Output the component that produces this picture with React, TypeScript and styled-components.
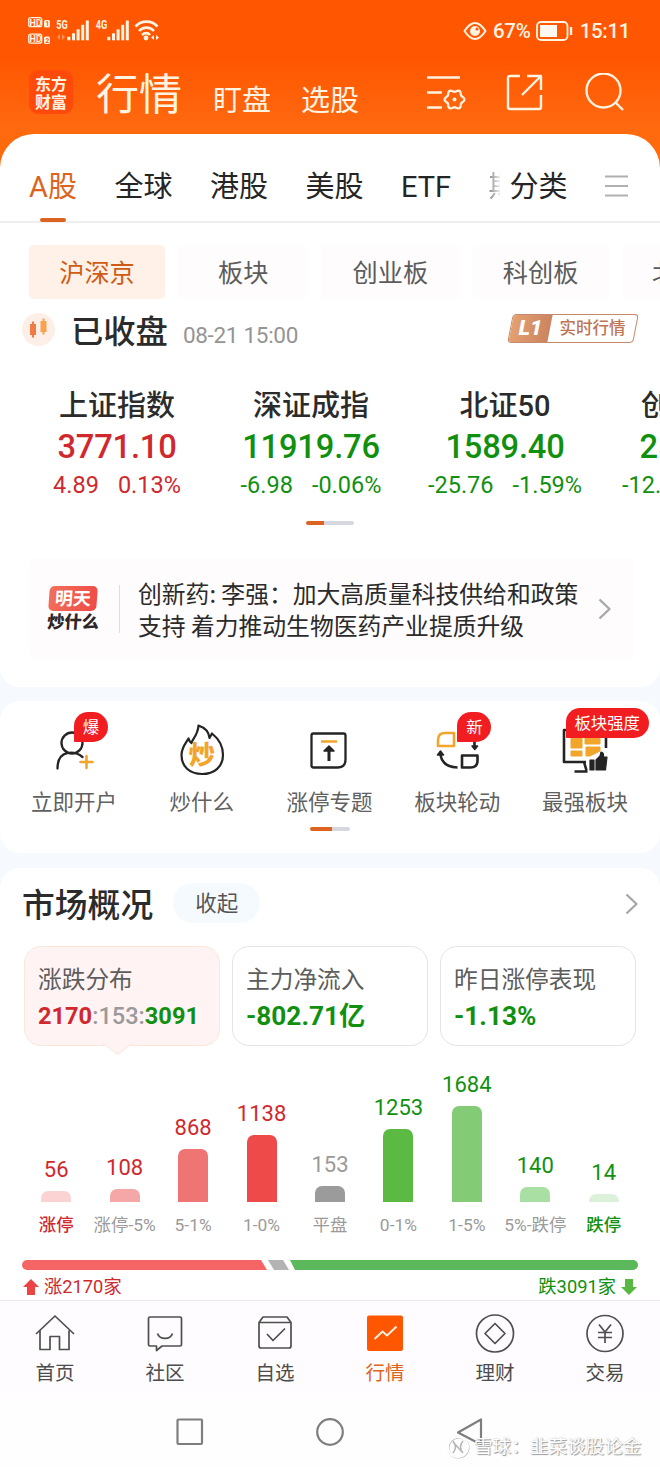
import React from 'react';
import styled, { createGlobalStyle } from 'styled-components';

const RED = '#d0282c';
const GREEN = '#11900f';
const ORANGE = '#dd6420';

const GlobalStyle = createGlobalStyle`
  * { box-sizing: border-box; }
  body {
    margin: 0;
    width: 660px;
    overflow-x: hidden;
    font-family: Roboto, "Noto Sans CJK SC", sans-serif;
    color: #2b2b2b;
    background: #f6faff;
  }
  svg { display: block; flex: none; }
`;

const Screen = styled.main`
  position: relative;
  width: 660px;
  height: 1467px;
  overflow: hidden;
  display: flex;
  flex-direction: column;
  white-space: nowrap;
`;

const Top = styled.header`
  height: 168px;
  flex: none;
  margin-bottom: -34px;
  background: linear-gradient(#ff5601 0, #ff5601 58px, #ff6a10 130px, #ff6a08 168px);
  color: #fff3e2;
`;

const StatusBar = styled.div`
  height: 60px;
  padding: 0 30px 0 27px;
  display: flex;
  justify-content: space-between;
  align-items: center;
`;

const StatusRight = styled.div`
  display: flex;
  align-items: center;
  font-size: 20.5px;
  line-height: 24px;
  font-weight: 500;
  padding-top: 1px;
`;

const Percent = styled.span`
  margin: 0 5px 0 6px;
  letter-spacing: -0.2px;
`;

const Clock = styled.span`
  margin-left: 7px;
  font-size: 20.5px;
  letter-spacing: -0.35px;
`;

const TitleRow = styled.div`
  display: flex;
  height: 74px;
  padding: 0 35px 0 29px;
`;

const Logo = styled.div`
  width: 44px;
  height: 44px;
  margin-top: 10px;
  border-radius: 9px;
  background: #ff4a0c;
  font: 700 16px/18px "Noto Sans CJK SC", sans-serif;
  text-align: center;
  padding-top: 4px;
`;

const Title = styled.h1`
  margin: 9px 0 0 23px;
  font-size: 43px;
  line-height: 52px;
  font-weight: 400;
  width: 86px;
`;

const SubTitle = styled.span<{ $gap: number }>`
  margin: 21px 0 0 ${(p) => p.$gap}px;
  font-size: 29px;
  line-height: 41px;
`;

const TitleIcons = styled.div`
  margin: 13px 0 0 auto;
  display: flex;
  gap: 40px;
`;

const Panel = styled.section<{ $h: number; $mt?: number; $radius: string }>`
  height: ${(p) => p.$h}px;
  flex: none;
  margin-top: ${(p) => p.$mt ?? 0}px;
  background: #fff;
  border-radius: ${(p) => p.$radius};
  overflow: hidden;
`;

const Tabs = styled.nav`
  height: 89px;
  border-bottom: 2px solid #efeff0;
  padding: 0 32px 0 29px;
  display: flex;
  font-size: 29px;
  line-height: 107px;
`;

const Tab = styled.div<{ $active?: boolean }>`
  margin-right: 37.5px;
  position: relative;
  color: ${(p) => (p.$active ? ORANGE : '#252525')};
  ${(p) =>
    p.$active &&
    `&::after {
      content: '';
      position: absolute;
      left: 11px;
      top: 84px;
      width: 26px;
      height: 4px;
      border-radius: 2px;
      background: ${ORANGE};
    }`}
`;

const CutTab = styled.div`
  width: 13px;
  overflow: hidden;
  margin-right: 9px;
  color: transparent;
  background: linear-gradient(90deg, #888, #eee);
  background-clip: text;
  -webkit-background-clip: text;
`;

const MenuButton = styled.div`
  margin: 41px 0 0 auto;
`;

const Chips = styled.div`
  margin: 22px 0 0 29px;
  display: flex;
  height: 54px;
`;

const Chip = styled.div<{ $w: number; $active?: boolean }>`
  flex: none;
  width: ${(p) => p.$w}px;
  margin-right: 13.2px;
  border-radius: 5px;
  background: ${(p) => (p.$active ? '#fff0e8' : '#fefcfd')};
  color: ${(p) => (p.$active ? '#cf5c14' : '#5c5c5c')};
  font-size: 25.2px;
  line-height: 58px;
  text-align: center;
`;

const MarketState = styled.div`
  height: 60px;
  padding: 0 22px;
  display: flex;
  align-items: center;
`;

const StateName = styled.strong`
  font-size: 32.3px;
  font-weight: 500;
  margin-left: 16px;
  line-height: 44px;
  padding-top: 5px;
`;

const StateTime = styled.span`
  margin-left: 15px;
  padding-top: 11px;
  font-size: 22.5px;
  letter-spacing: -0.3px;
  line-height: 28px;
  color: #949494;
`;

const LevelBadge = styled.div`
  margin-left: auto;
  width: 126px;
  height: 29px;
  display: flex;
  border: 1.5px solid #c58a6d;
  border-radius: 4px;
  transform: skewX(-11deg);
  overflow: hidden;
  margin-right: 2px;
  margin-bottom: 2px;
`;

const LevelTag = styled.b`
  width: 39px;
  background: linear-gradient(90deg, #e4a070, #cb8460);
  color: #fff;
  font-size: 21px;
  line-height: 27px;
  font-weight: 900;
  text-align: center;
`;

const LevelText = styled.span`
  flex: 1;
  text-align: center;
  transform: skewX(11deg);
  color: #bd7553;
  font-size: 16.5px;
  line-height: 27px;
  font-weight: 500;
`;

const Indices = styled.div`
  display: flex;
  margin: 27px 0 0 20px;
`;

const Index = styled.div`
  flex: none;
  width: 194px;
  text-align: center;
`;

const IndexName = styled.div`
  font-size: 29px;
  line-height: 40px;
  font-weight: 500;
`;

const IndexValue = styled.div<{ $c: string }>`
  color: ${(p) => p.$c};
  font-size: 32.7px;
  line-height: 42px;
  font-weight: 500;
  letter-spacing: -0.2px;
`;

const IndexChange = styled.div<{ $c: string }>`
  color: ${(p) => p.$c};
  font-size: 23.5px;
  line-height: 34px;
  display: flex;
  justify-content: center;
  gap: 19px;
`;

const Pager = styled.div<{ $w: number; $on: number; $mt: number }>`
  width: ${(p) => p.$w}px;
  height: 4px;
  margin: ${(p) => p.$mt}px auto 0;
  border-radius: 2px;
  background: linear-gradient(90deg, ${ORANGE} ${(p) => p.$on}px, #d6d7e0 ${(p) => p.$on}px);
`;

const News = styled.div`
  margin: 33px 26px 0 29px;
  height: 101px;
  border-radius: 8px;
  background: #fefcfd;
  padding: 0 22px 0 18px;
  display: flex;
  align-items: center;
`;

const NewsLogo = styled.div`
  width: 52px;
  text-align: center;
  padding-top: 1px;
`;

const NewsLogoTop = styled.div`
  margin: 0 auto;
  width: 48px;
  height: 25px;
  border-radius: 5px;
  background: linear-gradient(100deg, #f2705c, #ee4b45);
  color: #fff;
  font-size: 18px;
  line-height: 25px;
  font-weight: 700;
  transform: skewX(-4deg);
`;

const NewsLogoBottom = styled.div`
  font-size: 17.3px;
  line-height: 22px;
  font-weight: 900;
  color: #2e2728;
  transform: skewX(-4deg);
`;

const NewsText = styled.p`
  margin: 0;
  margin-left: 20px;
  padding-left: 18px;
  border-left: 1px solid #dedede;
  font-size: 23.8px;
  line-height: 32px;
  height: 48px;
  display: flex;
  align-items: center;
  font-family: "Noto Sans CJK SC", sans-serif;
`;

const Chevron = styled.span`
  margin-left: auto;
`;

const Shortcuts = styled.div`
  display: flex;
  padding: 20px 11px 0 10px;
`;

const Shortcut = styled.div`
  position: relative;
  flex: 1;
  display: flex;
  flex-direction: column;
  align-items: center;
  color: #606060;
  font-size: 21.5px;
  line-height: 30px;
  svg { margin-bottom: 9px; }
`;

const Bubble = styled.span<{ $x: number; $y: number; $w: number }>`
  position: absolute;
  left: ${(p) => p.$x}px;
  top: ${(p) => p.$y}px;
  width: ${(p) => p.$w}px;
  height: 30px;
  border-radius: 15px 16px 16px 1px;
  background: #f21d20;
  color: #fff;
  font-size: 16.4px;
  line-height: 32px;
  text-align: center;
`;

const SectionHead = styled.div`
  display: flex;
  align-items: center;
  height: 72px;
  padding: 0 21px 0 22px;
`;

const SectionTitle = styled.h2`
  margin: 0;
  font-size: 32.8px;
  line-height: 44px;
  font-weight: 500;
  padding-top: 4px;
`;

const Pill = styled.span`
  margin-left: 20px;
  width: 87px;
  height: 40px;
  border-radius: 20px;
  background: #f5faff;
  color: #555;
  font-size: 21.5px;
  line-height: 42px;
  text-align: center;
  margin-top: -2px;
`;

const Cards = styled.div`
  display: flex;
  gap: 12px;
  padding: 0 24px;
  margin-top: 6px;
`;

const Card = styled.div<{ $active?: boolean }>`
  position: relative;
  width: 196px;
  height: 100px;
  padding: 14.5px 0 0 13px;
  border-radius: 17px;
  border: 1.5px solid ${(p) => (p.$active ? '#fbe6dc' : '#e4e4e4')};
  background: ${(p) => (p.$active ? '#fff3f4' : '#fff')};
  ${(p) =>
    p.$active &&
    `&::after {
      content: '';
      position: absolute;
      left: 84px;
      bottom: -7px;
      width: 16px;
      height: 16px;
      transform: scaleX(1.3) rotate(45deg);
      border: solid #fbe6dc;
      border-width: 0 1.5px 1.5px 0;
      background: #fff3f4;
      border-radius: 0 0 3px 0;
    }`}
`;

const CardLabel = styled.div`
  font-size: 23.7px;
  line-height: 36px;
  color: #5d5d5d;
`;

const CardValue = styled.div<{ $c: string; $size?: number }>`
  font-size: ${(p) => p.$size ?? 26.2}px;
  line-height: 36px;
  font-weight: 700;
  color: ${(p) => p.$c};
`;

const Tint = styled.span<{ $c: string; $w?: number }>`
  color: ${(p) => p.$c};
  font-weight: ${(p) => p.$w ?? 700};
`;

const Chart = styled.div`
  display: flex;
  align-items: flex-end;
  height: 172px;
  margin: 19px 22px 0;
`;

const Column = styled.div`
  flex: 1;
  min-width: 0;
  display: flex;
  flex-direction: column;
  align-items: center;
`;

const BarValue = styled.span<{ $c: string }>`
  color: ${(p) => p.$c};
  font-size: 22px;
  line-height: 26px;
  margin-bottom: 8px;
`;

const Bar = styled.div<{ $h: number; $c: string }>`
  width: 30px;
  height: ${(p) => p.$h}px;
  border-radius: 7px 7px 0 0;
  background: ${(p) => p.$c};
`;

const BarLabel = styled.span<{ $c: string; $bold?: boolean }>`
  color: ${(p) => p.$c};
  font-weight: ${(p) => (p.$bold ? 500 : 400)};
  font-size: 17.4px;
  line-height: 24px;
  margin-top: 11px;
`;

const Ratio = styled.div`
  display: flex;
  margin: 23px 22px 0;
  height: 10px;
`;

const RatioPart = styled.div<{ $w: number; $c: string; $clip: string; $r: string }>`
  width: ${(p) => p.$w}px;
  background: ${(p) => p.$c};
  border-radius: ${(p) => p.$r};
  clip-path: polygon(${(p) => p.$clip});
`;

const RatioText = styled.div`
  display: flex;
  justify-content: space-between;
  padding: 4px 23px 0;
  font-size: 18.3px;
  line-height: 26px;
`;

const RatioSide = styled.span<{ $c: string }>`
  color: ${(p) => p.$c};
  display: flex;
  align-items: center;
  gap: 5px;
`;

const BottomTabs = styled.nav`
  height: 95px;
  flex: none;
  display: flex;
  background: #fefcfe;
  border-top: 1px solid #e9e8ea;
`;

const BottomTab = styled.div<{ $active?: boolean }>`
  width: 110px;
  padding-top: 12.5px;
  display: flex;
  flex-direction: column;
  align-items: center;
  gap: 6.5px;
  font-size: 19.5px;
  line-height: 28px;
  color: ${(p) => (p.$active ? ORANGE : '#4c4c4c')};
`;

const SystemNav = styled.div`
  height: 72px;
  flex: none;
  background: #fefefe;
  display: flex;
  align-items: center;
  justify-content: center;
  gap: 112.5px;
  padding-top: 1px;
`;

const Watermark = styled.div`
  position: absolute;
  left: 446px;
  top: 1434px;
  display: flex;
  align-items: center;
  gap: 4px;
  color: #fff;
  font-size: 18.6px;
  line-height: 26px;
  font-weight: 400;
  text-shadow: 1px 1px 1px #999, 0 0 1px #bbb;
`;

const bars: [string, string, number, string, string][] = [
  ['56', '涨停', 11, '#fbd3d3', RED],
  ['108', '涨停-5%', 13, '#f5a7a7', RED],
  ['868', '5-1%', 53, '#ef7474', RED],
  ['1138', '1-0%', 67, '#ee4a4a', RED],
  ['153', '平盘', 16, '#9b9b9b', '#9a9a9a'],
  ['1253', '0-1%', 73, '#5aba41', GREEN],
  ['1684', '1-5%', 96, '#84cb76', GREEN],
  ['140', '5%-跌停', 15, '#aadfa3', GREEN],
  ['14', '跌停', 8, '#dbf1d9', GREEN],
];

const indices: [string, string, string, string, string][] = [
  ['上证指数', '3771.10', '4.89', '0.13%', RED],
  ['深证成指', '11919.76', '-6.98', '-0.06%', GREEN],
  ['北证50', '1589.40', '-25.76', '-1.59%', GREEN],
  ['创业板指', '2595.47', '-12.18', '-0.47%', GREEN],
];

const gearPoints = Array.from({ length: 60 }, (_, i) => {
  const a = (i * Math.PI) / 30;
  const r = 8.8 + 1.1 * Math.cos(6 * a);
  return `${(454.5 + r * Math.cos(a)).toFixed(2)},${(99.5 + r * Math.sin(a)).toFixed(2)}`;
}).join(' ');

function Svg({ box, children, color = 'currentColor', sw = 2 }: { box: string; children: React.ReactNode; color?: string; sw?: number }) {
  const [, , w, h] = box.split(' ');
  return (
    <svg viewBox={box} width={w} height={h} fill="none" stroke={color} strokeWidth={sw} strokeLinejoin="round">
      {children}
    </svg>
  );
}

const SignalIcons = () => (
  <Svg box="27 14 134 32" sw={0}>
    <g fill="#fff3e2" fontFamily="Roboto" fontWeight="700">
      <rect x="28.7" y="17.7" width="13" height="9" rx="2" stroke="#fff3e2" strokeWidth="1.3" fill="none" />
      <text x="29.6" y="25.5" fontSize="9">HD</text>
      <rect x="28.7" y="34.2" width="13" height="9" rx="2" stroke="#fff3e2" strokeWidth="1.3" fill="none" />
      <text x="29.6" y="42" fontSize="9">HD</text>
      <rect x="44" y="20" width="6" height="7.5" rx="1.5" />
      <rect x="44" y="36.5" width="6" height="7.5" rx="1.5" />
      <text x="45.6" y="26.3" fontSize="6.5" fill="#ff5601">1</text>
      <text x="45.4" y="42.8" fontSize="6.5" fill="#ff5601">2</text>
      <text x="56.3" y="29" fontSize="12" textLength="11.5" lengthAdjust="spacingAndGlyphs">5G</text>
      <text x="95.8" y="29" fontSize="12" textLength="11.5" lengthAdjust="spacingAndGlyphs">4G</text>
      {[67, 107].map((x) => (
        <g key={x}>
          <rect x={x + 0.3} y="36.8" width="3" height="3.5" />
          <rect x={x + 5} y="33.3" width="3" height="7" />
          <rect x={x + 9.6} y="29.3" width="3" height="11" />
          <rect x={x + 14.2} y="24.8" width="3" height="15.5" />
          <rect x={x + 18.8} y="20.5" width="3" height="19.8" />
        </g>
      ))}
      <path d="M57 37l3-3v6zM65 37l-3-3v6z" opacity=".4" />
      <circle cx="146" cy="38" r="2.4" />
      <path d="M151 37.5l3-2.5v5zM159 37.5l-3-2.5v5z" />
    </g>
    <g stroke="#fff3e2" strokeWidth="2.6">
      <path d="M135.5 26.5c6-6.5 16-6.500 22 0M139 31c4-4.500 11-4.500 15 0M142 35c2.500-2.500 6-2.500 8 0" />
    </g>
  </Svg>
);

const Flame = () => (
  <Svg box="177 722 50 58" color="#242424" sw={2.2}>
    <path d="M198.500 726.500c6 2 10.500 6.500 11 12.500l2.500-4.500c7.500 6 11 13 11 21.500 0 11.500-8.500 19-21 19s-20.500-7.500-20.500-19c0-7.500 4-11.500 7-16.500 .5 2 1.500 3.500 3 4.500 .5-3.500 6.500-8 7-17.500z" />
    <text x="188.500" y="765" fontSize="26.500" fontWeight="900" fill="#f2a52b" stroke="none" fontFamily="Noto Sans CJK SC">炒</text>
  </Svg>
);

const shortcuts: { label: string; icon: React.ReactNode; bubble?: [string, number, number, number] }[] = [
  {
    label: '立即开户',
    bubble: ['爆', 64, -9, 34],
    icon: (
      <Svg box="49 721 50 58" color="#242424" sw={2.3}>
        <circle cx="72" cy="743" r="10.5" />
        <path d="M57.500 768.500c0-19 17-18 25-11.500" strokeLinecap="round" />
        <path d="M86.500 756v12M80.500 762h12" stroke="#f2a52b" strokeWidth="2.600" strokeLinecap="round" />
      </Svg>
    ),
  },
  { label: '炒什么', icon: <Flame /> },
  {
    label: '涨停专题',
    icon: (
      <Svg box="305 721 50 58" color="#242424" sw={2.3}>
        <path d="M314.500 733.500h30q2 0 2 2v24q0 8-8 8h-24q-2 0-2-2v-30q0-2 2-2z" />
        <path d="M322 741.500h16" stroke="#f2a52b" />
        <path d="M330 761v-13" strokeWidth="3" />
        <path d="M325 751l5-5 5 5z" fill="#242424" strokeWidth="1.500" />
      </Svg>
    ),
  },
  {
    label: '板块轮动',
    bubble: ['新', 64, -9, 34],
    icon: (
      <Svg box="433 721 50 58" color="#242424" sw={2.6}>
        <path d="M446 733h9v13h-16v-6q0-7 7-7z" stroke="#f2a52b" />
        <path d="M463 755.500h15.500v5q0 7-7 7H463z" />
        <path d="M441.500 755q2 12 17 12.500M475.500 741v6" />
        <path d="M438.500 755l3-4 3 4zM473 746h5.500l-2.700 3.500z" fill="#242424" strokeWidth="1.500" />
      </Svg>
    ),
  },
  {
    label: '最强板块',
    bubble: ['板块强度', 44.5, -13, 83],
    icon: (
      <Svg box="560 721 50 58" color="#242424" sw={2.6}>
        <path d="M606 748V730h-42v32h22M584 762l2.500 8.500M574.500 771.500h13" />
        <path d="M571 734h11v14h-11zM585 734h15v10h-15zM571 751h11v5h-11zM586 747h14v4l-10 5h-4z" fill="#f2a52b" stroke="#f2a52b" strokeWidth="1" />
        <path d="M590 760h4v10h-4zM596 770v-10l4-4 1-4q3 0 2.500 5h3.500l-1.500 13z" fill="#242424" strokeWidth="1.200" />
      </Svg>
    ),
  },
];

const bottomTabs: { label: string; icon: React.ReactNode }[] = [
  { label: '首页', icon: <path d="M1 20 20 2 39 20M5 16.500v19H15V22.500h9.500v13h9.500v-19" /> },
  { label: '社区', icon: <path d="M5 3h30q1.500 0 1.500 1.500v26q0 1.500-1.500 1.500H17l-5.500 4.500V32H5q-1.500 0-1.500-1.500v-26Q3.500 3 5 3zM12.500 19.500c2 6.500 13 6.500 15 0" /> },
  { label: '自选', icon: <path d="M4 8.500 8 3h24l4 5.500V32q0 2-2 2H6q-2 0-2-2zH36M12 20l6 6.500 12-12" /> },
  {
    label: '行情',
    icon: (
      <>
        <rect x="2" y="1.500" width="36" height="35.500" rx="2" fill="#ff5602" stroke="none" />
        <path d="M9.500 25l8-7.500 4.500 4 9.500-9" stroke="#fff0dd" strokeWidth="1.900" />
      </>
    ),
  },
  { label: '理财', icon: <><circle cx="20" cy="19.500" r="18.500" /><path d="M20 9.500l10 10-10 10-10-10z" /></> },
  { label: '交易', icon: <><circle cx="20" cy="19.500" r="18" /><path d="M14 10.500l6 7.500 6-7.500M13 18.500h14M13 23.500h14M20 18v11" /></> },
];

const ChevronIcon = () => (
  <Svg box="0 0 14 22" color="#a8a8a8" sw={2.4}>
    <path d="M1.500 1.500 11.500 11 1.500 20.500" />
  </Svg>
);

export default function App() {
  return (
    <Screen>
      <GlobalStyle />
      <Top>
        <StatusBar>
          <SignalIcons />
          <StatusRight>
            <Svg box="0 0 24 20" sw={2}>
              <path d="M1.500 10Q12-6 22.500 10 12 26 1.500 10z" />
              <circle cx="12" cy="10" r="5" fill="currentColor" stroke="none" />
              <circle cx="14" cy="8" r="1.500" fill="#ff5601" stroke="none" />
            </Svg>
            <Percent>67%</Percent>
            <Svg box="0 0 37 20" sw={1.8}>
              <rect x="1" y="1" width="30.500" height="18" rx="4" />
              <rect x="4" y="4" width="17" height="12" fill="#fff8f0" stroke="none" />
              <path d="M35 6v8" strokeWidth="2.400" />
            </Svg>
            <Clock>15:11</Clock>
          </StatusRight>
        </StatusBar>
        <TitleRow>
          <Logo>东方<br />财富</Logo>
          <Title>行情</Title>
          <SubTitle $gap={31}>盯盘</SubTitle>
          <SubTitle $gap={30}>选股</SubTitle>
          <TitleIcons>
            <Svg box="426 73 40 40" sw={2.3}>
              <path d="M427 77.500h33M427 92.500h15M427 107.500h15" />
              <polygon points={gearPoints} />
              <circle cx="454.500" cy="99.500" r="2" fill="currentColor" stroke="none" />
            </Svg>
            <Svg box="506 73 38 40" sw={2.4}>
              <path d="M520 76h-10q-2 0-2 2v29q0 2 2 2h29q2 0 2-2V95M527 76h14v14M541 76l-19 19" />
            </Svg>
            <Svg box="584 73 41 40" sw={2.4}>
              <circle cx="603.500" cy="90.500" r="17" />
              <path d="M615.500 102.500l7.500 7.500" />
            </Svg>
          </TitleIcons>
        </TitleRow>
      </Top>

      <Panel $h={553} $radius="34px 34px 20px 20px">
        <Tabs>
          <Tab $active>A股</Tab>
          <Tab>全球</Tab>
          <Tab>港股</Tab>
          <Tab>美股</Tab>
          <Tab>ETF</Tab>
          <CutTab>期</CutTab>
          <Tab>分类</Tab>
          <MenuButton>
            <Svg box="0 0 23 22" color="#b0b0b0" sw={2.2}>
              <path d="M0 1.500h23M0 11h23M0 20.500h23" />
            </Svg>
          </MenuButton>
        </Tabs>
        <Chips>
          <Chip $w={136} $active>沪深京</Chip>
          <Chip $w={130}>板块</Chip>
          <Chip $w={138}>创业板</Chip>
          <Chip $w={136}>科创板</Chip>
          <Chip $w={136}>北交所</Chip>
        </Chips>
        <MarketState>
          <Svg box="0 0 33 33" sw={0}>
            <circle cx="16.500" cy="16.500" r="16.500" fill="#fdeee7" />
            <path d="M8 11h2V8.500h2V11h2v11h-2v2.500h-2V22H8z" fill="#ef7c44" />
            <path d="M18.500 8h2V5.500h2V8h2v11h-2v2.500h-2V19h-2z" fill="#f8a24d" />
          </Svg>
          <StateName>已收盘</StateName>
          <StateTime>08-21 15:00</StateTime>
          <LevelBadge>
            <LevelTag>L1</LevelTag>
            <LevelText>实时行情</LevelText>
          </LevelBadge>
        </MarketState>
        <Indices>
          {indices.map(([name, value, diff, pct, c]) => (
            <Index key={name}>
              <IndexName>{name}</IndexName>
              <IndexValue $c={c}>{value}</IndexValue>
              <IndexChange $c={c}>
                <span>{diff}</span>
                <span>{pct}</span>
              </IndexChange>
            </Index>
          ))}
        </Indices>
        <Pager $w={48} $on={18} $mt={19} />
        <News>
          <NewsLogo>
            <NewsLogoTop>明天</NewsLogoTop>
            <NewsLogoBottom>炒什么</NewsLogoBottom>
          </NewsLogo>
          <NewsText>
            <span>
              创新药: 李强：加大高质量科技供给和政策
              <br />
              支持 着力推动生物医药产业提质升级
            </span>
          </NewsText>
          <Chevron><ChevronIcon /></Chevron>
        </News>
      </Panel>

      <Panel $h={152} $mt={14} $radius="20px">
        <Shortcuts>
          {shortcuts.map((s) => (
            <Shortcut key={s.label}>
              {s.icon}
              {s.label}
              {s.bubble && (
                <Bubble $x={s.bubble[1]} $y={s.bubble[2]} $w={s.bubble[3]}>{s.bubble[0]}</Bubble>
              )}
            </Shortcut>
          ))}
        </Shortcuts>
        <Pager $w={40} $on={22} $mt={9} />
      </Panel>

      <Panel $h={432} $mt={15} $radius="20px 20px 0 0">
        <SectionHead>
          <SectionTitle>市场概况</SectionTitle>
          <Pill>收起</Pill>
          <Chevron><ChevronIcon /></Chevron>
        </SectionHead>
        <Cards>
          <Card $active>
            <CardLabel>涨跌分布</CardLabel>
            <CardValue $c="#9a9a9a" $size={23.6}>
              <Tint $c={RED}>2170</Tint>
              <Tint $c="#9a9a9a" $w={500}>:153:</Tint>
              <Tint $c={GREEN}>3091</Tint>
            </CardValue>
          </Card>
          <Card>
            <CardLabel>主力净流入</CardLabel>
            <CardValue $c={GREEN}>-802.71亿</CardValue>
          </Card>
          <Card>
            <CardLabel>昨日涨停表现</CardLabel>
            <CardValue $c={GREEN}>-1.13%</CardValue>
          </Card>
        </Cards>
        <Chart>
          {bars.map(([value, label, h, fill, c], i) => (
            <Column key={label}>
              <BarValue $c={c}>{value}</BarValue>
              <Bar $h={h} $c={fill} />
              <BarLabel $c={i === 0 || i === 8 ? c : '#9a9a9a'} $bold={i === 0 || i === 8}>{label}</BarLabel>
            </Column>
          ))}
        </Chart>
        <Ratio>
          <RatioPart $w={245} $c="#f66566" $r="5px 0 0 5px" $clip="0 0, 239px 0, 100% 100%, 0 100%" />
          <RatioPart $w={23} $c="#b3b3b3" $r="0" $clip="1px 0, 16px 0, 22px 100%, 7px 100%" />
          <RatioPart $w={348} $c="#5bb85b" $r="0 5px 5px 0" $clip="0 0, 100% 0, 100% 100%, 5px 100%" />
        </Ratio>
        <RatioText>
          <RatioSide $c={RED}>
            <Svg box="0 0 16 16" sw={0}>
              <path d="M8 0l8 8h-4v8H4V8H0z" fill="#ea4444" />
            </Svg>
            涨2170家
          </RatioSide>
          <RatioSide $c={GREEN}>
            跌3091家
            <Svg box="0 0 16 16" sw={0}>
              <path d="M8 16l8-8h-4V0H4v8H0z" fill="#56b840" />
            </Svg>
          </RatioSide>
        </RatioText>
      </Panel>

      <BottomTabs>
        {bottomTabs.map((t) => (
          <BottomTab key={t.label} $active={t.label === '行情'}>
            <Svg box="0 0 40 40" color="#4f4f4f" sw={1.7}>{t.icon}</Svg>
            {t.label}
          </BottomTab>
        ))}
      </BottomTabs>

      <SystemNav>
        <Svg box="0 0 28 28" color="#7e7e7e" sw={2.2}>
          <rect x="1.500" y="1.500" width="24.500" height="24.500" rx="1" />
        </Svg>
        <Svg box="0 0 28 28" color="#7e7e7e" sw={2.2}>
          <circle cx="14" cy="14" r="12.800" />
        </Svg>
        <Svg box="0 0 28 28" color="#7e7e7e" sw={2.2}>
          <path d="M24 1.500v25L1 14.500z" />
        </Svg>
      </SystemNav>
      <Watermark>
        <Svg box="0 0 24 24" color="#fff" sw={2}>
          <circle cx="12.500" cy="12.500" r="10" stroke="#b5b5b5" />
          <circle cx="12" cy="12" r="10" />
          <path d="M7 6q5 6 0 12M17 6q-5 6 0 12M7 7l10 11" stroke="#b5b5b5" strokeWidth="1.500" />
        </Svg>
        雪球：韭菜谈股论金
      </Watermark>
    </Screen>
  );
}
